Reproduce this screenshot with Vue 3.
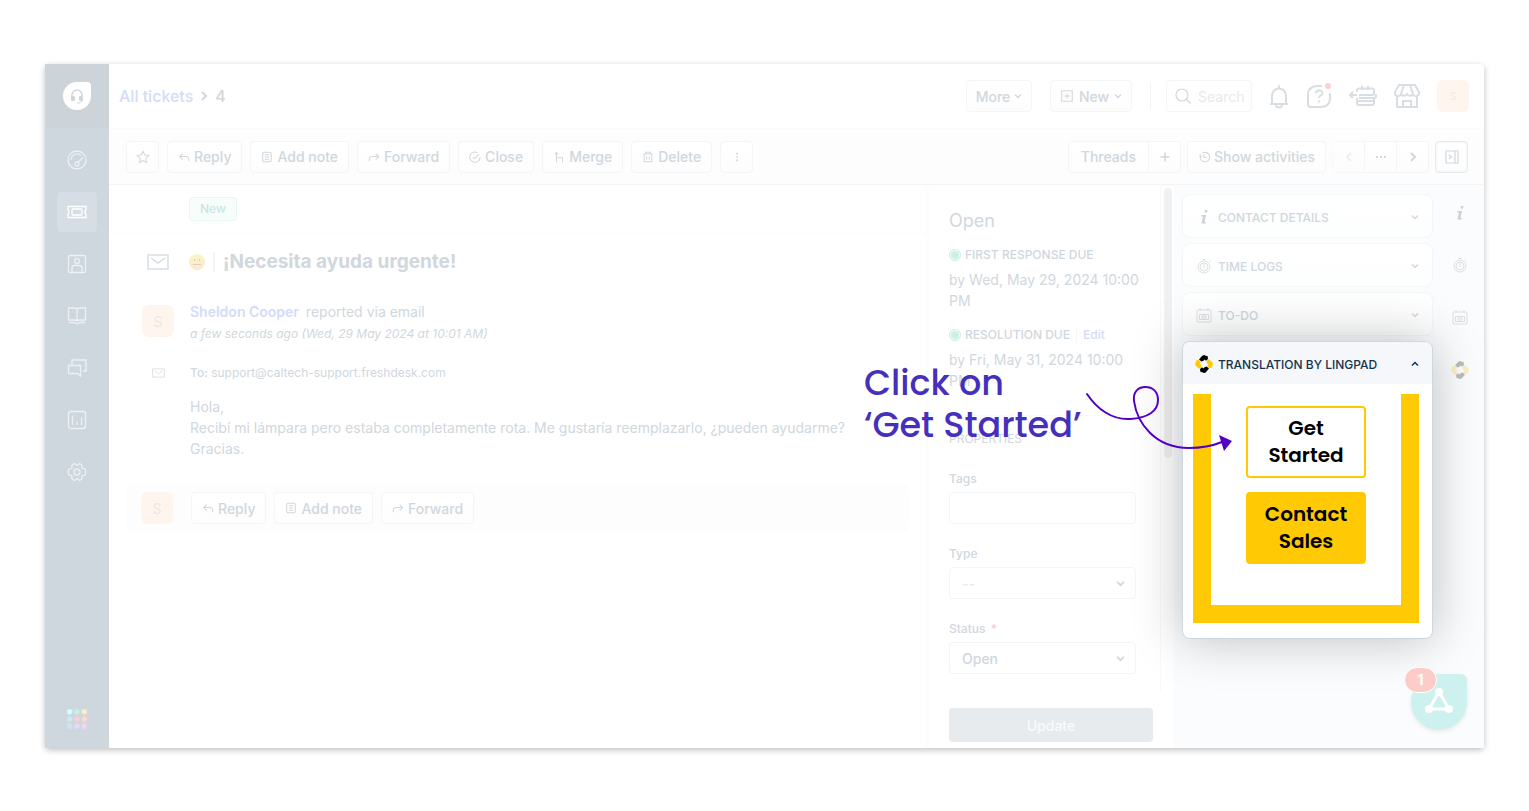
<template>
  <div class="page">
    <div class="window">
      <aside class="sidebar">
        <a href="#" class="logo" aria-label="Home">
          <span class="logo-shape">
            <svg viewBox="0 0 28 28" width="28" height="28">
              <path d="M9 16v-3a5 5 0 0 1 10 0v3" fill="none" stroke="#cfd6dc" stroke-width="1.5" />
              <rect x="8" y="14" width="4" height="5" rx="1" fill="#cfd6dc" />
              <rect x="16" y="14" width="4" height="5" rx="1" fill="#cfd6dc" />
              <path d="M19 18.500q0 2.500-5 2.500" fill="none" stroke="#cfd6dc" stroke-width="1" />
            </svg>
          </span>
        </a>
        <nav class="side-nav">
          <a
            v-for="item in navItems"
            :key="item.name"
            href="#"
            class="side-item"
            :class="{ active: item.name === 'Tickets' }"
            :aria-label="item.name"
          >
            <svg viewBox="0 0 20 20" width="20" height="20"><path :d="item.path" /></svg>
          </a>
        </nav>
        <svg class="apps" viewBox="0 0 20 20" width="20" height="20">
          <circle
            v-for="(color, i) in appColors"
            :key="i"
            :cx="2.7 + (i % 3) * 7.3"
            :cy="2.7 + Math.floor(i / 3) * 7.3"
            r="2.7"
            :fill="color"
          />
        </svg>
      </aside>

      <div class="main">
        <header class="header">
          <div class="breadcrumb">
            <a href="#">All tickets</a>
            <svg class="icon heavy" viewBox="0 0 12 12" width="12" height="12"><path d="M4 2l4 4-4 4" /></svg>
            <span>4</span>
          </div>
          <div class="header-actions">
            <button class="btn more">More <svg class="icon bold" viewBox="0 0 8 8" width="8" height="8"><path :d="icons.down" /></svg></button>
            <button class="btn new">
              <svg class="icon" viewBox="0 0 16 16" width="14" height="14"><path d="M2 2h12v12H2zM8 5v6M5 8h6" /></svg>
              New
              <svg class="icon bold" viewBox="0 0 8 8" width="8" height="8"><path :d="icons.down" /></svg>
            </button>
            <span class="header-line"></span>
            <label class="search">
              <svg class="icon" viewBox="0 0 18 18" width="18" height="18"><path d="M14 8A6 6 0 1 1 2 8a6 6 0 0 1 12 0zM12.500 12.500l4 4" /></svg>
              <input type="text" placeholder="Search" aria-label="Search" />
            </label>
            <div class="header-icons">
              <button class="plain" aria-label="Notifications">
                <svg class="icon big" viewBox="0 0 28 28" width="28" height="28"><path d="M5 22h18M7 22V13.500a7 7 0 0 1 14 0V22M14 6V3.500M11 22.500a3 3 0 0 0 6 0" /></svg>
              </button>
              <button class="plain help" aria-label="Help">
                <svg class="icon big" viewBox="0 0 28 28" width="28" height="28">
                  <path d="M17 4h-4Q3 4 3 13v10q0 2 2 2h10q10 0 10-9v-5" />
                  <path d="M11 11.500c0-4 6.500-4 6.500-.5 0 2.500-3.500 2-3.500 5M14 18.500v2" />
                </svg>
                <i class="red-dot"></i>
              </button>
              <button class="plain" aria-label="Freshworks bookings">
                <svg class="icon big" viewBox="0 0 28 28" width="28" height="28"><path d="M8 10V8.500q0-2 2-2h13q2 0 2 2V11q0 2-2 2H10M1 13h7M4 10l-3 3 3 3M8 16v5q0 2 2 2h13q2 0 2-2v-5M8 19h17M13 4v4M19 4v4M10 16h15q2 0 2-2v-2" /></svg>
              </button>
              <button class="plain" aria-label="Marketplace">
                <svg class="icon big" viewBox="0 0 28 28" width="28" height="28"><path d="M6 3h16l4 7a3 3 0 0 1-6 2 3.500 3.500 0 0 1-6 0 3.500 3.500 0 0 1-6 0 3 3 0 0 1-6-2zM11 3l-3 9M17 3l3 9M4 14v11h20V14M10 25v-6h8v6" /></svg>
              </button>
            </div>
            <span class="avatar small">S</span>
          </div>
        </header>

        <div class="toolbar">
          <div class="tools">
            <button class="btn square" aria-label="Star">
              <svg class="icon" viewBox="0 0 16 16" width="14" height="14"><path d="M8 1.500l2 4.300 4.700.6-3.500 3.200.9 4.700L8 12l-4.100 2.300.9-4.700L1.300 6.400 6 5.800z" /></svg>
            </button>
            <button v-for="tool in tools" :key="tool.label" class="btn">
              <svg class="icon" viewBox="0 0 14 14" width="12" height="12"><path :d="icons[tool.icon]" /></svg>
              {{ tool.label }}
            </button>
            <button class="btn square" aria-label="More actions">
              <svg class="icon heavy" viewBox="0 0 14 14" width="12" height="12"><path d="M6 3h2M6 7h2M6 11h2" /></svg>
            </button>
          </div>
          <div class="tools right">
            <div class="group">
              <button class="btn threads">Threads</button>
              <button class="btn square" aria-label="Add thread">
                <svg class="icon bold" viewBox="0 0 14 14" width="14" height="14"><path d="M7 2.500v9M2.500 7h9" /></svg>
              </button>
            </div>
            <button class="btn activities">
              <svg class="icon" viewBox="0 0 14 14" width="12" height="12"><path d="M2.500 3v3h3M3 5a5.500 5.500 0 1 0 2-2.500M7 4v3.500h3M9 1.500l2.500 1.500" /></svg>
              Show activities
            </button>
            <div class="group">
              <button class="btn square dim" aria-label="Previous"><svg class="icon" viewBox="0 0 12 12" width="12" height="12"><path d="M8 2L4 6l4 4" /></svg></button>
              <button class="btn square" aria-label="List"><svg class="icon heavy" viewBox="0 0 12 12" width="12" height="12"><path d="M1 6h2M5 6h2M9 6h2" /></svg></button>
              <button class="btn square" aria-label="Next"><svg class="icon heavy" viewBox="0 0 12 12" width="12" height="12"><path d="M4 2l4 4-4 4" /></svg></button>
            </div>
            <button class="btn square pressed" aria-label="Toggle panel">
              <svg class="icon" viewBox="0 0 14 14" width="14" height="14"><path d="M1 1h12v12H1zM10 1v12M4 5l2.500 2L4 9" /></svg>
            </button>
          </div>
        </div>

        <div class="content">
          <section class="conversation">
            <div class="status-row"><span class="badge">New</span></div>
            <div class="row title-row">
              <span class="lead">
                <svg class="mail" viewBox="0 0 22 16" width="22" height="16"><path d="M1 1h20v14H1zM4 4l7 5 7-5" /></svg>
              </span>
              <svg class="emoji" viewBox="0 0 16 16" width="16" height="16">
                <defs>
                  <linearGradient id="face" x1="0" y1="0" x2="0" y2="1">
                    <stop offset="0" stop-color="#f8f8c4" />
                    <stop offset="1" stop-color="#ffe6cd" />
                  </linearGradient>
                </defs>
                <circle cx="8" cy="8" r="8" fill="url(#face)" />
                <path d="M5.500 5v2M10.500 5v2M4 10.500h8" fill="none" stroke="#d9d3bf" />
              </svg>
              <h1>¡Necesita ayuda urgente!</h1>
            </div>
            <div class="row sender">
              <span class="lead"><span class="avatar">S</span></span>
              <div>
                <p class="from"><a href="#">Sheldon Cooper</a> reported via email</p>
                <p class="time">a few seconds ago (Wed, 29 May 2024 at 10:01 AM)</p>
              </div>
            </div>
            <div class="row to-row">
              <span class="lead">
                <svg class="mail" viewBox="0 0 22 16" width="13" height="10"><path d="M1 1h20v14H1zM4 4l7 5 7-5" /></svg>
              </span>
              <p><b>To:</b> support@caltech-support.freshdesk.com</p>
            </div>
            <div class="message">
              <p>Hola,</p>
              <p>Recibí mi lámpara pero estaba completamente rota. Me gustaría reemplazarlo, ¿pueden ayudarme?</p>
              <p>Gracias.</p>
            </div>
            <div class="reply-box">
              <span class="avatar">S</span>
              <div class="tools">
                <button v-for="tool in tools.slice(0, 3)" :key="tool.label" class="btn">
                  <svg class="icon" viewBox="0 0 14 14" width="12" height="12"><path :d="icons[tool.icon]" /></svg>
                  {{ tool.label }}
                </button>
              </div>
            </div>
          </section>

          <section class="properties">
            <div class="scroll-area">
              <form class="fields" @submit.prevent>
                <h2>Open</h2>
                <h3><i class="due-dot"></i>FIRST RESPONSE DUE</h3>
                <p class="due">by Wed, May 29, 2024 10:00 PM</p>
                <h3><i class="due-dot"></i>RESOLUTION DUE <a href="#">Edit</a></h3>
                <p class="due">by Fri, May 31, 2024 10:00 PM</p>
                <h3 class="section">PROPERTIES</h3>
                <label for="tags">Tags</label>
                <input id="tags" v-model="form.tags" class="field" type="text" />
                <label for="type">Type</label>
                <div class="select">
                  <select id="type" v-model="form.type" class="field empty">
                    <option>--</option>
                  </select>
                  <svg class="icon bold" viewBox="0 0 8 8" width="9" height="9"><path :d="icons.down" /></svg>
                </div>
                <label for="status">Status <em>*</em></label>
                <div class="select">
                  <select id="status" v-model="form.status" class="field">
                    <option>Open</option>
                    <option>Pending</option>
                    <option>Resolved</option>
                  </select>
                  <svg class="icon bold" viewBox="0 0 8 8" width="9" height="9"><path :d="icons.down" /></svg>
                </div>
              </form>
              <div class="track"><i class="thumb"></i></div>
            </div>
            <div class="update-bar"><button class="update">Update</button></div>
          </section>

          <section class="widgets">
            <div class="cards">
              <button v-for="card in cards" :key="card.label" class="card">
                <svg class="glyph" viewBox="0 0 16 16" width="16" height="16"><path :d="icons[card.icon]" :class="card.icon" /></svg>
                <span>{{ card.label }}</span>
                <svg class="icon bold" viewBox="0 0 8 8" width="8" height="8"><path :d="icons.down" /></svg>
              </button>
              <div class="translation">
                <button class="translation-head">
                  <svg viewBox="0 0 18 18" width="18" height="18">
                    <path v-for="(petal, i) in petals" :key="i" :d="icons.petal" :fill="petal" :transform="`rotate(${i * 90} 9 9)`" />
                  </svg>
                  <span>TRANSLATION BY LINGPAD</span>
                  <svg class="caret" viewBox="0 0 8 8" width="8" height="8"><path d="M1 5.500l3-3 3 3" /></svg>
                </button>
                <div class="frame">
                  <button class="cta">Get Started</button>
                  <button class="cta filled">Contact Sales</button>
                </div>
                <p class="callout">Click on<br />‘Get Started’</p>
                <svg class="arrow" viewBox="0 0 160 80" width="160" height="80">
                  <path d="M7 14C17 29 32 40 50 39C68 38 78 31 78 20C78 11 72 7 65.500 7C57 7 53 13 54 21C57 43 75 68 109 68C121 68 132 66 142 62" />
                  <polygon points="139,55 152,61 144,71" />
                </svg>
              </div>
            </div>
            <div class="rail">
              <svg v-for="card in cards" :key="card.label" class="glyph" viewBox="0 0 16 16" width="16" height="16"><path :d="icons[card.icon]" :class="card.icon" /></svg>
              <svg viewBox="0 0 18 18" width="18" height="18" class="faded">
                <path v-for="(petal, i) in petals" :key="i" :d="icons.petal" :fill="petal" :transform="`rotate(${i * 90} 9 9)`" />
              </svg>
            </div>
          </section>
        </div>
      </div>

      <button class="chat" aria-label="Freshworks launcher">
        <svg viewBox="0 0 56 56" width="56" height="56">
          <path d="M28 18L18 35h20z" fill="none" stroke="#fff" stroke-width="3" />
          <circle cx="28" cy="18" r="4" fill="#fff" />
          <circle cx="18" cy="35" r="4" fill="#fff" />
          <circle cx="38" cy="35" r="4" fill="#fff" />
        </svg>
        <span class="count">1</span>
      </button>
    </div>
  </div>
</template>

<script setup>
import { reactive } from 'vue'

const form = reactive({
  tags: '',
  type: '--',
  status: 'Open'
})

const icons = {
  down: 'M1 2.500l3 3 3-3',
  reply: 'M5.500 3L2 6.500 5.500 10M2 6.500h7q3.500 0 3.500 3.500v2',
  note: 'M4 1.500h6q2 0 2 2v7q0 2-2 2H4q-2 0-2-2v-7q0-2 2-2zM4.500 4.500h5M4.500 7h5M4.500 9.500h5',
  forward: 'M9 3l3.500 3.500L9 10M12.500 6.500H5Q1.500 6.500 1.500 10v2',
  close: 'M10 2A6 6 0 1 0 13 7M4.500 7l2 2L12 3.500',
  merge: 'M4 13V2M2 4l2-2 2 2M4 8h7v5',
  delete: 'M1.500 3.500h11M4.500 3.500V1.500h5v2M2.500 3.500v9h9v-9M5.500 6v4M8.500 6v4',
  info: 'M9 1h2.500l-.5 2.500H8.500zM5.500 6H10L8.500 13h1.500l-.5 1.500H5.500L7 7.500H5z',
  timer: 'M14 9A6 6 0 1 1 2 9a6 6 0 0 1 12 0zM12 9a4 4 0 1 1-8 0 4 4 0 0 1 8 0zM8 6v4M6.500 1.500h3M13 2.500l1.500 1.500',
  todo: 'M2 3h12q1 0 1 1v10q0 1-1 1H2q-1 0-1-1V4q0-1 1-1zM4 1v3M12 1v3M3.500 7.500h9v5h-9zM6 9h4v2H6z',
  petal: 'M4 4.500L6.500 1.500Q7.500 0 9.500 0L10.500 .8 12.500 1 13 4 11 5.800 9.500 4.500 8.500 5.800 6.500 6.500z'
}

const petals = ['#000', '#ffc903', '#000', '#ffc903']

const tools = [
  { label: 'Reply', icon: 'reply' },
  { label: 'Add note', icon: 'note' },
  { label: 'Forward', icon: 'forward' },
  { label: 'Close', icon: 'close' },
  { label: 'Merge', icon: 'merge' },
  { label: 'Delete', icon: 'delete' }
]

const cards = [
  { label: 'CONTACT DETAILS', icon: 'info' },
  { label: 'TIME LOGS', icon: 'timer' },
  { label: 'TO-DO', icon: 'todo' }
]

const navItems = [
  { name: 'Dashboard', path: 'M19 10a9 9 0 1 1-18 0 9 9 0 0 1 18 0zM4 10a6 6 0 0 1 10-4.500M12 14a2 2 0 1 1-4 0 2 2 0 0 1 4 0zM11 12.500l5-5' },
  { name: 'Tickets', path: 'M1 4.500h18v3q-2 2.500 0 5v3H1v-3q2-2.500 0-5zM6 7h8q1 0 1 1v4q0 1-1 1H6q-1 0-1-1V8q0-1 1-1z' },
  { name: 'Contacts', path: 'M3 1.500h14q1.500 0 1.500 1.500v14q0 1.500-1.500 1.500H3q-1.500 0-1.500-1.500V3q0-1.500 1.500-1.500zM12.500 7a2.500 2.500 0 1 1-5 0 2.500 2.500 0 0 1 5 0zM5 18v-4q0-2.500 2.500-2.500h5q2.500 0 2.500 2.500v4' },
  { name: 'Solutions', path: 'M10 3q-1-1-3-1H1.500v12H7q2 0 3 1 1-1 3-1h5.500V2H13q-2 0-3 1zM10 3v12M2 16.500h5l3 1.500 3-1.500h5' },
  { name: 'Forums', path: 'M5 7V2h14v11h-3M1.500 7.500h12V18l-3-2.500h-9z' },
  { name: 'Analytics', path: 'M4 1.500h12q2.500 0 2.500 2.500v12q0 2.500-2.500 2.500H4q-2.500 0-2.500-2.500V4q0-2.500 2.500-2.500zM5.500 5.500v9.500M10 11.500V15M14.500 7.500V15' },
  { name: 'Admin', path: 'M7.500 1.500l2.500 2 2.500-2 2.500 1.500v3l3.500 1.500v5L15 14v3l-2.500 1.500-2.500-2-2.500 2L5 17v-3l-3.500-1.500v-5L5 6V3zM13 10a3 3 0 1 1-6 0 3 3 0 0 1 6 0z' }
]

const appColors = ['#ccffff', '#cdeedf', '#ffebc6', '#cfe6fb', '#f7cfda', '#fcd8ca', '#d2e2f1', '#e8d8f1', '#f3d5f0']
</script>

<style>
body {
  margin: 0;
  background: #fff;
}
</style>

<style scoped>
* {
  box-sizing: border-box;
}

.page {
  display: flex;
  min-height: 100vh;
  padding: 64px 45px 63px;
  font-family: Inter, "Liberation Sans", sans-serif;
  font-size: 14px;
  color: #d0d7dd;
}

.window {
  position: relative;
  display: flex;
  flex: 1;
  min-width: 0;
  background: #fff;
  border-radius: 4px;
  box-shadow: 0 2px 6px rgba(0, 0, 0, 0.25);
}

h1, h2, h3, p {
  margin: 0;
}

a {
  color: #d4dbf8;
  text-decoration: none;
}

button, input, select {
  font: inherit;
  color: inherit;
}

button {
  padding: 0;
  border: none;
  background: none;
  cursor: pointer;
}

svg {
  flex: none;
}

.icon {
  fill: none;
  stroke: #d0d7dd;
  stroke-width: 1.2;
}

.icon.bold {
  stroke-width: 1.5;
}

.icon.heavy {
  stroke-width: 2;
}

.icon.big {
  stroke: #d9dee3;
  stroke-width: 2;
}

/* sidebar */
.sidebar {
  display: flex;
  flex-direction: column;
  align-items: center;
  width: 64px;
  background: #ced6de;
}

.logo {
  display: flex;
  align-items: center;
  justify-content: center;
  width: 64px;
  height: 64px;
  background: #ccd3d9;
}

.logo-shape {
  width: 28px;
  height: 28px;
  background: #fff;
  border-radius: 14px 4px 14px 14px;
}

.side-nav {
  display: flex;
  flex: 1;
  flex-direction: column;
  gap: 12px;
  padding-top: 12px;
}

.side-item {
  display: flex;
  align-items: center;
  justify-content: center;
  width: 40px;
  height: 40px;
  border-radius: 4px;
}

.side-item path {
  fill: none;
  stroke: #eef1f4;
  stroke-width: 1.3;
}

.side-item.active {
  background: #d6dde4;
}

.side-item.active path {
  stroke: #fff;
}

.apps {
  margin-bottom: 19px;
}

/* header */
.main {
  display: flex;
  flex: 1;
  flex-direction: column;
  min-width: 0;
}

.header {
  display: flex;
  align-items: center;
  justify-content: space-between;
  height: 64px;
  padding: 0 15px 0 10px;
}

.breadcrumb {
  display: flex;
  align-items: center;
  gap: 5px;
  font-size: 16px;
  font-weight: 500;
}

.header-actions {
  display: flex;
  align-items: center;
}

.btn {
  display: flex;
  align-items: center;
  justify-content: center;
  gap: 4px;
  height: 32px;
  padding: 0 10px;
  border: 1px solid #f3f5f6;
  border-radius: 4px;
  background: linear-gradient(#fff, #fdfdfd);
  font-weight: 500;
  white-space: nowrap;
}

.btn.square {
  width: 33px;
  padding: 0;
}

.btn.more {
  width: 66px;
  margin-right: 18px;
}

.btn.new {
  width: 82px;
  gap: 5px;
}

.header-line {
  width: 1px;
  height: 28px;
  margin: 0 15px 0 18px;
  background: #f3f5f6;
}

.search {
  display: flex;
  align-items: center;
  gap: 6px;
  width: 86px;
  height: 32px;
  padding-left: 7px;
  border: 1px solid #f3f5f6;
  border-radius: 4px;
}

.search input {
  width: 100%;
  min-width: 0;
  padding: 0;
  border: none;
  outline: none;
  background: none;
}

.search input::placeholder {
  color: #e6eaee;
}

.header-icons {
  display: flex;
  gap: 16px;
  margin: 0 16px 0 13px;
}

.plain {
  display: flex;
}

.help {
  position: relative;
}

.help .icon {
  margin-left: -4px;
}

.red-dot {
  position: absolute;
  top: 1px;
  right: 2px;
  width: 6px;
  height: 6px;
  border-radius: 50%;
  background: #ffd0d2;
}

.avatar {
  display: flex;
  align-items: center;
  justify-content: center;
  width: 32px;
  height: 32px;
  border-radius: 6px;
  background: #fff5ef;
  color: #f0e6e0;
}

.avatar.small {
  font-size: 11px;
}

/* toolbar */
.toolbar {
  display: flex;
  align-items: center;
  justify-content: space-between;
  height: 57px;
  padding: 0 16px 0 17px;
  border-top: 1px solid #f8f9fa;
  border-bottom: 1px solid #f3f4f5;
  background: #fdfdfd;
}

.tools {
  display: flex;
  gap: 8px;
}

.tools.right {
  gap: 6px;
}

.group {
  display: flex;
}

.group .btn:not(:first-child) {
  margin-left: -1px;
  border-top-left-radius: 0;
  border-bottom-left-radius: 0;
}

.group .btn:not(:last-child) {
  border-top-right-radius: 0;
  border-bottom-right-radius: 0;
}

.btn.threads {
  padding: 0 12px;
}

.btn.dim {
  opacity: 0.5;
}

.btn.pressed {
  border-color: #e6ebef;
  box-shadow: inset 0 0 3px #e6ebef;
}

.content {
  display: flex;
  flex: 1;
}

/* conversation */
.conversation {
  flex: 1;
  min-width: 0;
}

.status-row {
  display: flex;
  align-items: center;
  height: 49px;
  padding-left: 80px;
  border-bottom: 1px solid #fafbfb;
}

.badge {
  padding: 0 10px;
  border: 1px solid #e5f8f3;
  border-radius: 4px;
  background: #f7fdfb;
  color: #cbe7de;
  font-size: 12px;
  font-weight: 500;
  line-height: 22px;
}

.row {
  display: flex;
}

.lead {
  display: flex;
  justify-content: center;
  width: 32px;
  margin: 0 16px 0 33px;
}

.title-row {
  align-items: center;
  height: 56px;
}

.mail {
  fill: none;
  stroke: #d8dee3;
  stroke-width: 1.5;
}

.emoji {
  margin: 0 8px 0 -1px;
}

h1 {
  padding-left: 8px;
  border-left: 2px solid #f3f4f5;
  font-size: 19px;
  font-weight: 700;
  line-height: 20px;
}

.sender {
  padding-top: 11px;
}

.sender .avatar {
  margin-top: 4px;
}

.from {
  line-height: 21px;
}

.from a {
  margin-right: 3px;
  font-weight: 600;
}

.time {
  font-size: 12px;
  font-style: italic;
  line-height: 24px;
}

.to-row {
  align-items: center;
  margin-top: 15px;
  font-size: 12px;
  line-height: 24px;
}

.to-row b {
  font-weight: 500;
}

.message {
  margin-top: 11px;
  padding-left: 81px;
  line-height: 21px;
}

.reply-box {
  display: flex;
  align-items: center;
  gap: 18px;
  height: 50px;
  margin: 24px 16px 0 17px;
  padding: 0 15px;
  border-radius: 8px;
  background: #fdfdfd;
}

/* properties */
.properties {
  display: flex;
  flex-direction: column;
  width: 249px;
  border-left: 4px solid #fcfdfd;
}

.scroll-area {
  display: flex;
  flex: 1;
}

.fields {
  flex: 1;
  padding: 24px 24px 0 20px;
  border-right: 1px solid #f8f9fa;
}

h2 {
  font-size: 18px;
  font-weight: 400;
  line-height: 24px;
}

h3 {
  display: flex;
  align-items: center;
  gap: 4px;
  margin-top: 12px;
  font-size: 12px;
  font-weight: 500;
  line-height: 20px;
  white-space: nowrap;
}

h3 a {
  margin-left: 2px;
  padding-left: 6px;
  border-left: 1px solid #f6f7f8;
  line-height: 14px;
}

.due-dot {
  width: 12px;
  height: 12px;
  border: 1px solid #ccf0e1;
  border-radius: 50%;
  background: #ccf0e1;
  box-shadow: inset 0 0 0 1px #fff;
}

.due {
  margin: 4px -6px 14px 0;
  line-height: 21px;
}

.section {
  margin: 24px 0 0;
  padding: 13px 0 22px;
  border-top: 1px solid #f8f9fa;
  font-weight: 400;
}

.fields label {
  display: block;
  margin-bottom: 5px;
  font-size: 12px;
  font-weight: 500;
  line-height: 16px;
}

.fields label em {
  margin-left: 2px;
  color: #ffc9cc;
  font-style: normal;
}

.field {
  display: block;
  width: 100%;
  height: 32px;
  margin-bottom: 22px;
  padding: 0 12px;
  border: 1px solid #f3f5f6;
  border-radius: 4px;
  outline: none;
  background: #fff;
  font-weight: 500;
  appearance: none;
}

.field.empty {
  color: #e6eaee;
}

.select {
  position: relative;
}

.select:last-child .field {
  margin-bottom: 0;
}

.select .icon {
  position: absolute;
  top: 12px;
  right: 11px;
}

.track {
  width: 13px;
  padding: 3px 2px 0 3px;
}

.thumb {
  display: block;
  width: 8px;
  height: 270px;
  border-radius: 4px;
  background: #f1f1f1;
}

.update-bar {
  padding: 16px 21px 6px 20px;
}

.update {
  display: block;
  width: 100%;
  height: 34px;
  border-radius: 4px;
  background: #e7ebee;
  color: #f9fafb;
  font-weight: 500;
}

/* widgets */
.widgets {
  display: flex;
  width: 310px;
  background: #fbfcfe;
}

.cards {
  display: flex;
  flex-direction: column;
  gap: 5px;
  width: 259px;
  padding: 9px 0 0 8px;
}

.card, .translation-head {
  display: flex;
  align-items: center;
  gap: 6px;
  width: 100%;
  height: 44px;
  padding: 2px 13px 0 13px;
  font-size: 12px;
  font-weight: 500;
}

.card {
  border: 1px solid #f5f6f8;
  border-radius: 8px;
  background: linear-gradient(#fff, #fdfefe);
}

.card span, .translation-head span {
  flex: 1;
  text-align: left;
}

.glyph {
  fill: none;
  stroke: #dcdfe2;
  stroke-width: 1;
}

.glyph .info {
  fill: #ccd2d8;
  stroke: none;
}

.translation {
  position: relative;
  z-index: 1;
  height: 298px;
  border: 1px solid #cfd7df;
  border-radius: 8px;
  background: #fff;
  box-shadow: 0 0 50px rgba(0, 0, 0, 0.25);
}

.translation-head {
  height: 42px;
  padding: 2px 13px 0 12px;
  gap: 5px;
  border-radius: 8px 8px 0 0;
  background: #f5f7fb;
  color: #12344d;
}

.caret {
  fill: none;
  stroke: #12344d;
  stroke-width: 1.5;
}

.frame {
  display: flex;
  flex-direction: column;
  align-items: center;
  gap: 14px;
  height: 229px;
  margin: 10px 13px 0 10px;
  padding-top: 12px;
  border: solid #ffc903;
  border-width: 0 18px 18px;
}

.cta {
  width: 120px;
  height: 72px;
  padding: 0 16px;
  border: 2px solid #ffc903;
  border-radius: 4px;
  background: #fff;
  color: #000;
  font-family: Poppins, Inter, sans-serif;
  font-size: 20px;
  font-weight: 600;
  line-height: 27px;
}

.cta.filled {
  background: #ffc903;
}

.callout {
  position: absolute;
  top: 20px;
  left: -319px;
  color: #4430bd;
  font-family: Poppins, Inter, sans-serif;
  font-size: 35px;
  font-weight: 500;
  line-height: 42px;
  white-space: nowrap;
}

.arrow {
  position: absolute;
  top: 38px;
  left: -103px;
  pointer-events: none;
}

.arrow path {
  fill: none;
  stroke: #5200c4;
  stroke-width: 2;
  stroke-linecap: round;
}

.arrow polygon {
  fill: #5200c4;
}

.rail {
  display: flex;
  flex: 1;
  flex-direction: column;
  align-items: center;
  gap: 36px;
  padding: 20px 0 0 2px;
}

.faded {
  opacity: 0.25;
}

/* launcher */
.chat {
  position: absolute;
  right: 17px;
  bottom: 18px;
  z-index: 2;
  width: 56px;
  height: 56px;
  border-radius: 28px 6px 28px 28px;
  background: #ccf1ef;
  box-shadow: 0 2px 4px rgba(0, 0, 0, 0.08);
}

.count {
  position: absolute;
  top: -7px;
  left: -7px;
  width: 33px;
  border: 1px solid #fff;
  border-radius: 13px;
  background: #fccdc8;
  color: #fff;
  font-weight: 700;
  line-height: 24px;
}
</style>
